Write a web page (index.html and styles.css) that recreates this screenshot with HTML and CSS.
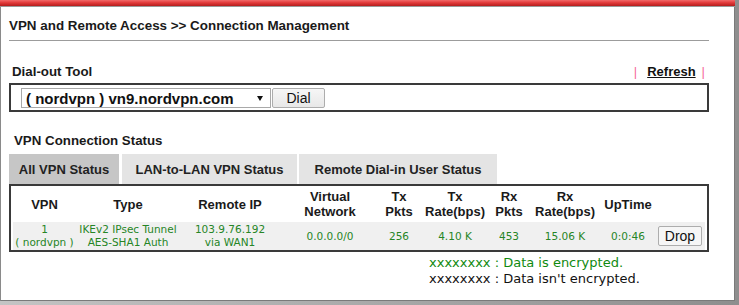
FILE: index.html
```html
<!DOCTYPE html>
<html lang="en">
<head>
    <meta charset="UTF-8">
    <title>VPN Connection Management</title>
    <link rel="stylesheet" href="styles.css">
</head>
<body>
    <div class="frame">
        <div class="topbar"></div>
        <div class="page">
            <h1 class="title">VPN and Remote Access &gt;&gt; Connection Management</h1>
            <hr class="rule">

            <div class="tool-head">
                <span class="label">Dial-out Tool</span>
                <span class="refresh">
                    <span class="sep">|</span><a href="#" class="refresh-link">Refresh</a><span class="sep sep-end">|</span>
                </span>
            </div>
            <div class="dial-box">
                <div class="select">
                    <span class="select-text">( nordvpn ) vn9.nordvpn.com</span>
                    <span class="caret"></span>
                </div>
                <button class="btn btn-dial">Dial</button>
            </div>

            <div class="label status-label">VPN Connection Status</div>
            <div class="tabs">
                <div class="tab tab-active tab-all">All VPN Status</div>
                <div class="tab tab-lan">LAN-to-LAN VPN Status</div>
                <div class="tab tab-remote">Remote Dial-in User Status</div>
            </div>
            <div class="status-box">
                <table class="status">
                    <colgroup>
                        <col style="width:63px"><col style="width:104px"><col style="width:100px"><col style="width:100px"><col style="width:38px">
                        <col style="width:74px"><col style="width:34px"><col style="width:78px"><col style="width:48px"><col style="width:53px">
                    </colgroup>
                    <thead>
                        <tr>
                            <th>VPN</th>
                            <th>Type</th>
                            <th>Remote IP</th>
                            <th>Virtual<br>Network</th>
                            <th>Tx<br>Pkts</th>
                            <th>Tx<br>Rate(bps)</th>
                            <th>Rx<br>Pkts</th>
                            <th>Rx<br>Rate(bps)</th>
                            <th>UpTime</th>
                            <th></th>
                        </tr>
                    </thead>
                    <tbody>
                        <tr>
                            <td>1<br>( nordvpn )</td>
                            <td>IKEv2 IPsec Tunnel<br>AES-SHA1 Auth</td>
                            <td>103.9.76.192<br>via WAN1</td>
                            <td>0.0.0.0/0</td>
                            <td>256</td>
                            <td>4.10 K</td>
                            <td>453</td>
                            <td>15.06 K</td>
                            <td>0:0:46</td>
                            <td class="drop-cell"><button class="btn btn-drop">Drop</button></td>
                        </tr>
                    </tbody>
                </table>
            </div>
            <div class="legend">
                <div class="legend-on">xxxxxxxx : Data is encrypted.</div>
                <div class="legend-off">xxxxxxxx : Data isn't encrypted.</div>
            </div>
        </div>
    </div>
</body>
</html>
```

FILE: styles.css
```css
body {
    margin: 0;
    font-family: "Liberation Sans", Arial, sans-serif;
    color: #1a1a1a;
}
.frame {
    width: 739px;
    height: 305px;
    box-sizing: border-box;
    display: flex;
    flex-direction: column;
    padding: 0 4px 4px 0;
    background: linear-gradient(to right, #c4c4c4, #8e8e8e);
}
.topbar {
    height: 6px;
    background: linear-gradient(#f26a6a, #e23a3a 45%, #b51d1d);
    border-bottom: 1px solid #9a9a9a;
}
.page {
    flex: 1;
    background: #fff;
    border-left: 1px solid #8a8a8a;
    border-right: 1px solid #7a7a7a;
    border-bottom: 1px solid #7a7a7a;
    padding: 0 0 0 8px;
}
.title {
    margin: 11px 0 0;
    font-size: 13.4px;
    line-height: 16px;
    font-weight: bold;
}
.rule {
    width: 700px;
    margin: 6px 0 0;
    border: 0;
    border-top: 1px solid #9c9c9c;
}
.label {
    font-size: 13.3px;
    line-height: 16px;
    font-weight: bold;
}
.tool-head {
    width: 700px;
    margin-top: 23px;
    display: flex;
    justify-content: space-between;
    padding-left: 3px;
    box-sizing: border-box;
}
.refresh {
    font-size: 13px;
    line-height: 16px;
    margin-right: 4px;
}
.sep {
    color: #f56a9c;
    margin-right: 10px;
}
.sep-end {
    margin: 0 0 0 6px;
}
.refresh-link {
    color: #111;
    font-weight: bold;
    text-decoration: underline;
}
.dial-box {
    width: 700px;
    box-sizing: border-box;
    margin-top: 3px;
    border: 2px solid #3a3a3a;
    padding: 3px 0 2px 10px;
    display: flex;
}
.select {
    width: 250px;
    height: 20px;
    box-sizing: border-box;
    border: 1px solid #a9a9a9;
    display: flex;
    align-items: center;
    padding-left: 4px;
}
.select-text {
    font-size: 15px;
    font-weight: bold;
    color: #111;
}
.caret {
    margin-left: auto;
    margin-right: 7px;
    width: 0;
    height: 0;
    border-left: 3px solid transparent;
    border-right: 3px solid transparent;
    border-top: 5px solid #111;
}
.btn {
    font-family: "Liberation Sans", Arial, sans-serif;
    font-size: 14px;
    color: #111;
    background: linear-gradient(#f6f6f6, #e8e8e8);
    border: 1px solid #adadad;
    border-radius: 2px;
    padding: 0;
    height: 20px;
}
.btn-dial {
    width: 53px;
    margin-left: 1px;
}
.status-label {
    margin: 21px 0 0 5px;
}
.tabs {
    display: flex;
    margin-top: 5px;
    height: 30px;
}
.tab {
    background: #e4e4e4;
    font-size: 13px;
    font-weight: bold;
    color: #222;
    display: flex;
    align-items: center;
    justify-content: center;
}
.tab-active {
    background: #c6c6c6;
}
.tab-all {
    width: 110px;
}
.tab-lan {
    width: 175px;
    margin-left: 3px;
}
.tab-remote {
    width: 198px;
    margin-left: 2px;
}
.status-box {
    width: 700px;
    box-sizing: border-box;
    border: 2px solid #3a3a3a;
    padding: 0 2px 0 2px;
}
.status {
    width: 692px;
    table-layout: fixed;
    border-collapse: collapse;
}
.status th {
    height: 36px;
    padding: 0;
    font-size: 13px;
    line-height: 15px;
    font-weight: bold;
    color: #1a1a1a;
    text-align: center;
    vertical-align: middle;
    white-space: nowrap;
}
.status td {
    height: 28px;
    padding: 0;
    background: #f0f0f0;
    font-family: "DejaVu Sans", Verdana, sans-serif;
    font-size: 10.5px;
    line-height: 13px;
    color: #268526;
    text-align: center;
    vertical-align: middle;
    white-space: nowrap;
}
.status td.drop-cell {
    padding-left: 3px;
}
.btn-drop {
    width: 44px;
    background: #f6f6f6;
}
.legend {
    margin: 3px 0 0 420px;
    font-family: "DejaVu Sans", Verdana, sans-serif;
    font-size: 13px;
    line-height: 15.5px;
}
.legend-on {
    color: #108a10;
}
.legend-off {
    color: #111;
}
```
